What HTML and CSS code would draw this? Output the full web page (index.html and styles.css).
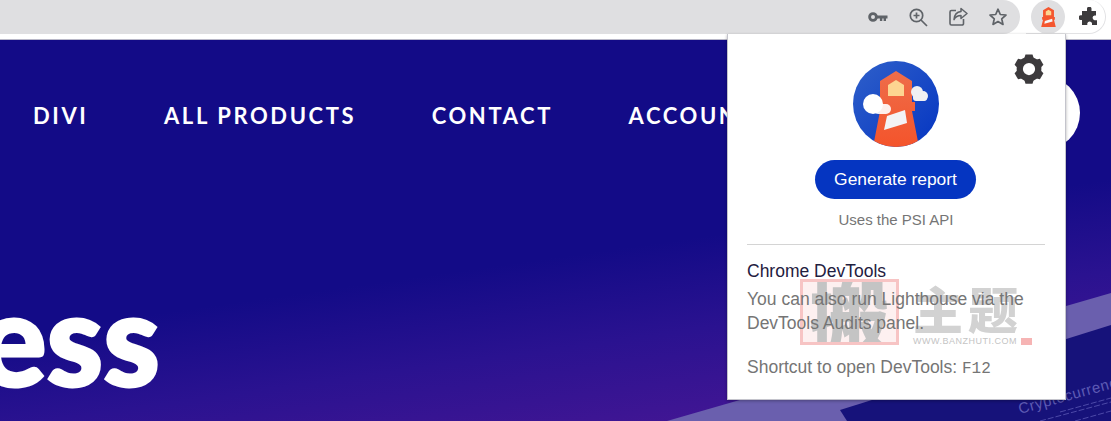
FILE: index.html
```html
<!DOCTYPE html>
<html lang="en">
<head>
    <meta charset="UTF-8">
    <meta name="viewport" content="width=device-width, initial-scale=1.0">
    <title>Lighthouse popup</title>
    <link rel="stylesheet" href="styles.css">
</head>
<body>
    <div class="toolbar">
        <div class="omnibox">
            <svg class="tool-icon" viewBox="0 0 20 20"><circle cx="5" cy="10" r="3.400" fill="none" stroke="#5f6368" stroke-width="2.800"/><path d="M8 8.500h11.500v3h-1.500v2.500h-2.400v-2.500h-1.300v2.500h-2.400v-2.500H8z" fill="#5f6368"/></svg>
            <svg class="tool-icon" viewBox="0 0 20 20"><circle cx="8.500" cy="8.500" r="6.200" fill="none" stroke="#5f6368" stroke-width="1.700"/><path d="M13 13l6 6M8.500 5.500v6M5.500 8.500h6" fill="none" stroke="#5f6368" stroke-width="1.700"/></svg>
            <svg class="tool-icon" viewBox="0 0 20 20"><path d="M8 3.500H3.500a1.500 1.500 0 0 0-1.500 1.500v11.500a1.500 1.500 0 0 0 1.500 1.500H14a1.500 1.500 0 0 0 1.500-1.500V12" fill="none" stroke="#5f6368" stroke-width="1.600"/><path d="M13 1.500l6 5-6 5V8.600c-3.500 0-5.500 1.200-7 4 .3-4.500 2.800-7.500 7-8z" fill="none" stroke="#5f6368" stroke-width="1.500" stroke-linejoin="round"/></svg>
            <svg class="tool-icon" viewBox="0 0 20 20"><path d="M10 2.200l2.300 5.300 5.700.5-4.300 3.800 1.300 5.600L10 14.500l-5 2.900 1.300-5.600L2 8l5.700-.5z" fill="none" stroke="#5f6368" stroke-width="1.700" stroke-linejoin="round"/></svg>
        </div>
        <div class="ext-pill">
            <div class="ext-active">
                <svg class="ext-lighthouse" viewBox="0 0 16 22"><path d="M8 0l6 3.500V11h1v3h-1l2 8H0l2-8H1v-3h1V3.500z" fill="#f4562e"/><path d="M8 3l3 2v4H5V5z" fill="#fdd591"/><path d="M4 15.500l8-2.500.5 3-9 2.500z" fill="#f5f5f5"/></svg>
            </div>
            <svg class="ext-puzzle" viewBox="0 0 20 20"><path d="M8 1.500a2.300 2.300 0 0 1 4.500 0V4H17v4.500h-1.500a2.400 2.400 0 0 0 0 4.700H18V18h-5v-1.700a2.400 2.400 0 0 0-4.700 0V18H3v-5H1.500a2.400 2.400 0 0 1 0-4.700H3V4h5z" fill="#3c3a3c"/></svg>
        </div>
    </div>

    <div class="hero">
        <nav class="site-nav">
            <a>DIVI</a>
            <a>ALL PRODUCTS</a>
            <a>CONTACT</a>
            <a>ACCOUNT</a>
        </nav>
        <div class="nav-circle"></div>
        <h1 class="hero-title">ess</h1>
        <!-- laptop mockup, coords are hero coords -->
        <svg class="hero-art" viewBox="0 0 1111 381">
            <polygon points="667,381 1111,253 1111,381" fill="#6a5fae"/>
            <polygon points="840,370 1111,285 1111,381 847,381" fill="#16127a"/>
            <text class="art-title" transform="translate(1020 374) rotate(-15.500)">Cryptocurrency</text>
            <path d="M1040 381l71-19M1075 381l36-10M1060 372l51-14" stroke="#4c49a8" stroke-width="1" stroke-dasharray="6 2" fill="none"/>
        </svg>
    </div>

    <div class="popup">
        <svg class="gear" viewBox="0 0 24 24">
            <circle cx="12" cy="12" r="7.400" fill="none" stroke="#3c3a3c" stroke-width="5"/>
            <g fill="#3c3a3c">
                <path d="M9.200 .3h5.600l1.400 4.500H7.800z"/>
                <path d="M9.200 .3h5.600l1.400 4.500H7.800z" transform="rotate(60 12 12)"/>
                <path d="M9.200 .3h5.600l1.400 4.500H7.800z" transform="rotate(120 12 12)"/>
                <path d="M9.200 .3h5.600l1.400 4.500H7.800z" transform="rotate(180 12 12)"/>
                <path d="M9.200 .3h5.600l1.400 4.500H7.800z" transform="rotate(240 12 12)"/>
                <path d="M9.200 .3h5.600l1.400 4.500H7.800z" transform="rotate(300 12 12)"/>
            </g>
        </svg>
        <svg class="logo" viewBox="0 0 86 86">
            <defs>
                <clipPath id="logo-clip"><circle cx="43" cy="43" r="43"/></clipPath>
                <linearGradient id="logo-bg" x1="0" y1="0" x2="1" y2="1"><stop offset="0" stop-color="#2f60ca"/><stop offset="1" stop-color="#0535c1"/></linearGradient>
                <linearGradient id="logo-tower" x1="0" y1="0" x2="0" y2="1"><stop offset="0" stop-color="#ee6d4a"/><stop offset="1" stop-color="#f4542b"/></linearGradient>
            </defs>
            <circle cx="43" cy="43" r="43" fill="url(#logo-bg)"/>
            <g clip-path="url(#logo-clip)">
                <path d="M43 10l16 10v21h3v9h-3l7 36H20l7-36v-9V20z" fill="url(#logo-tower)"/>
                <path d="M43 19l8 5v11H35V24z" fill="#fdd591"/>
                <path d="M34 55l18-6 2 13-23 7z" fill="#f3f3f5"/>
                <circle cx="20" cy="43" r="10" fill="#fff"/>
                <rect x="20" y="43" width="18" height="10" rx="5" fill="#fff" opacity="0.9"/>
                <circle cx="64" cy="31" r="6" fill="#f0f0f2"/>
                <circle cx="70" cy="35" r="5" fill="#f0f0f2"/>
                <rect x="60" y="33" width="14" height="7" rx="3" fill="#f0f0f2"/>
            </g>
        </svg>
        <button class="generate-btn">Generate report</button>
        <p class="psi-note">Uses the PSI API</p>
        <hr class="divider">
        <div class="devtools">
            <h2>Chrome DevTools</h2>
            <p>You can also run Lighthouse via the DevTools Audits panel.</p>
            <p class="shortcut">Shortcut to open DevTools: <code>F12</code></p>
        </div>
        <!-- watermark sits under the text -->
        <div class="watermark">
            <div class="stamp"><span>搬</span></div>
            <div class="wm-side">
                <div class="wm-chars">主题</div>
                <div class="wm-url">WWW.BANZHUTI.COM<i></i></div>
            </div>
        </div>
    </div>
</body>
</html>
```

FILE: styles.css
```css
* { box-sizing: border-box; }
html, body { margin: 0; height: 100%; }
body { width: 1111px; height: 421px; overflow: hidden; position: relative; background: #fff; font-family: "Liberation Sans", Arial, sans-serif; }

.toolbar { height: 40px; display: flex; align-items: flex-start; background: #fff; border-bottom: 1px solid #b9b8c8; }
.omnibox { width: 1020px; height: 34px; flex: none; background: #dfdfe1; border-radius: 0 17px 17px 0; display: flex; justify-content: flex-end; align-items: center; gap: 20px; padding-right: 12px; }
.tool-icon { width: 20px; height: 20px; display: block; }
.ext-pill { width: 80px; height: 34px; margin-left: 6px; border: 1px solid #e2e2e4; border-left: 0; border-top: 0; border-radius: 0 17px 17px 0; display: flex; align-items: center; gap: 14px; padding-left: 5px; }
.ext-active { width: 34px; height: 34px; border-radius: 50%; background: #dfdfe1; display: flex; align-items: center; justify-content: center; flex: none; }
.ext-lighthouse { width: 15px; height: 20px; }
.ext-puzzle { width: 20px; height: 20px; }

.hero { height: 381px; position: relative; overflow: hidden; background: linear-gradient(172deg, #130b87 0, #130b87 55%, #2a1290 72%, #4f1896 100%); }
.site-nav { display: flex; gap: 75.5px; padding: 62px 0 0 33px; font-family: Lato, sans-serif; font-weight: 700; font-size: 22px; line-height: 28px; letter-spacing: 2.6px; color: #fff; white-space: nowrap; }
.nav-circle { position: absolute; left: 1006px; top: 36px; width: 74px; height: 74px; border-radius: 50%; background: #fff; }
.hero-title { margin: 137px 0 0 -22px; font-family: Lato, sans-serif; font-weight: 900; font-size: 128px; line-height: 140px; color: #fff; -webkit-text-stroke: 3px #fff; }
.hero-art { position: absolute; left: 0; top: 0; width: 1111px; height: 381px; }
.art-title { font-family: "Liberation Sans", Arial, sans-serif; font-size: 15px; letter-spacing: 0.6px; fill: #5e5bb4; }

.popup { position: absolute; left: 727px; top: 34px; width: 339px; height: 366px; background: #fff; border: 1px solid #c4c4cc; border-top: 0; padding: 27px 20px 0 19px; display: flex; flex-direction: column; align-items: center; box-shadow: 0 1px 3px rgba(0, 0, 0, 0.3); }
.gear { position: absolute; left: 286px; top: 20px; width: 30px; height: 30px; }
.logo { width: 86px; height: 86px; flex: none; }
.generate-btn { width: 161px; height: 39px; margin: 13px 1px 0 0; border: 0; border-radius: 20px; background: #0535c1; color: #fff; font: 17.4px "Liberation Sans", Arial, sans-serif; }
.psi-note { margin: 12px 0 0; font-size: 15px; line-height: 18px; color: #757575; }
.divider { width: 298px; margin: 15px 0 0; border: 0; border-top: 1px solid #d4d4d4; }
.devtools { width: 298px; margin-top: 16px; position: relative; z-index: 1; font-size: 17.5px; line-height: 24px; color: #757575; }
.devtools h2 { margin: 0 0 6px; font-size: 17.5px; font-weight: 400; line-height: 20px; color: #1f2040; }
.devtools p { margin: 0; }
.devtools .shortcut { margin-top: 20px; }
.devtools code { font-family: "Liberation Mono", monospace; font-size: 16px; }

.watermark { position: absolute; left: 72px; top: 245px; display: flex; gap: 14px; color: #d2d2d2; }
.stamp { width: 99px; height: 66px; background: #fdf0f0; border: 3px solid #f7c4c4; display: flex; justify-content: center; align-items: center; overflow: hidden; }
.stamp span { font-family: "Noto Sans CJK SC", sans-serif; font-size: 80px; line-height: 66px; font-weight: 900; color: #c4c4c4; }
.wm-side { display: flex; flex-direction: column; }
.wm-chars { font-family: "Noto Sans CJK SC", sans-serif; font-weight: 900; font-size: 50px; line-height: 50px; letter-spacing: 5px; margin-top: 3px; white-space: nowrap; }
.wm-url { font-size: 9px; letter-spacing: 0.5px; line-height: 9px; color: #c4c4c4; white-space: nowrap; margin-top: 5px; display: flex; align-items: center; gap: 4px; }
.wm-url i { display: block; width: 11px; height: 7px; background: #f6b4b4; }
```
